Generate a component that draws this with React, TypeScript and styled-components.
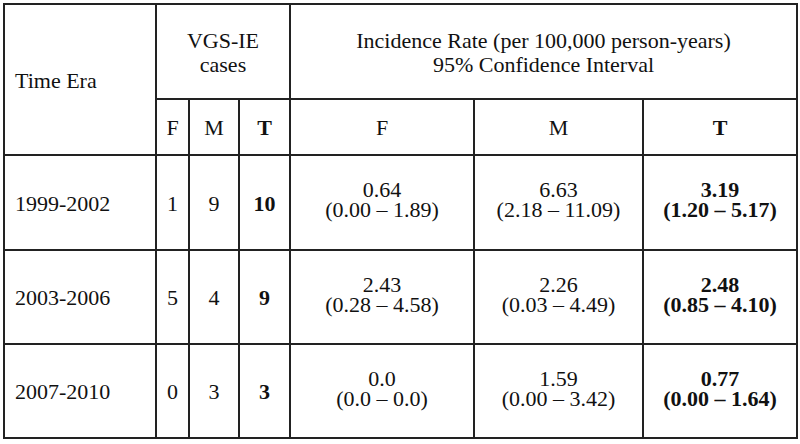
import React from 'react'
import styled, { createGlobalStyle } from 'styled-components'

const GlobalStyle = createGlobalStyle`
  html, body {
    margin: 0;
    padding: 0;
    background: #ffffff;
  }
  body {
    font-family: 'Liberation Serif', 'Times New Roman', serif;
    color: #111111;
  }
`

const StyledPage = styled.div`
  width: 800px;
  height: 444px;
  padding: 3px 0 0 3px;
  box-sizing: border-box;
  background: #ffffff;
`

const StyledTable = styled.table`
  border-collapse: collapse;
  table-layout: fixed;
  width: 793px;
  font-size: 22px;
  font-family: 'Liberation Serif', 'Times New Roman', serif;
`

const StyledRow = styled.tr<{ $height: number }>`
  height: ${props => props.$height}px;
`

const StyledCell = styled.td<{ $align?: 'left' | 'center'; $bold?: boolean; $tight?: boolean }>`
  border: 2px solid #222222;
  padding: ${props => (props.$align === 'left' ? '2px 0 0 10px' : props.$tight ? '0 0 5px 0' : '2px 0 0 0')};
  text-align: ${props => props.$align || 'center'};
  vertical-align: middle;
  font-weight: ${props => (props.$bold ? 'bold' : 'normal')};
  line-height: ${props => (props.$tight ? '20px' : '24px')};
  white-space: nowrap;
`

const StyledLine = styled.div`
  display: block;
`

type Interval = { rate: string; range: string }

const rows: {
  era: string
  f: string
  m: string
  t: string
  rates: [Interval, Interval, Interval]
}[] = [
  {
    era: '1999-2002',
    f: '1',
    m: '9',
    t: '10',
    rates: [
      { rate: '0.64', range: '(0.00 – 1.89)' },
      { rate: '6.63', range: '(2.18 – 11.09)' },
      { rate: '3.19', range: '(1.20 – 5.17)' },
    ],
  },
  {
    era: '2003-2006',
    f: '5',
    m: '4',
    t: '9',
    rates: [
      { rate: '2.43', range: '(0.28 – 4.58)' },
      { rate: '2.26', range: '(0.03 – 4.49)' },
      { rate: '2.48', range: '(0.85 – 4.10)' },
    ],
  },
  {
    era: '2007-2010',
    f: '0',
    m: '3',
    t: '3',
    rates: [
      { rate: '0.0', range: '(0.0 – 0.0)' },
      { rate: '1.59', range: '(0.00 – 3.42)' },
      { rate: '0.77', range: '(0.00 – 1.64)' },
    ],
  },
]

const rowHeights = [95, 94, 94]

const App: React.FC = () => {
  return (
    <StyledPage>
      <GlobalStyle />
      <StyledTable>
        <colgroup>
          <col style={{ width: 152 }} />
          <col style={{ width: 33 }} />
          <col style={{ width: 50 }} />
          <col style={{ width: 51 }} />
          <col style={{ width: 184 }} />
          <col style={{ width: 169 }} />
          <col style={{ width: 154 }} />
        </colgroup>
        <tbody>
          <StyledRow $height={95}>
            <StyledCell rowSpan={2} $align="left">
              Time Era
            </StyledCell>
            <StyledCell colSpan={3}>
              <StyledLine>VGS-IE</StyledLine>
              <StyledLine>cases</StyledLine>
            </StyledCell>
            <StyledCell colSpan={3}>
              <StyledLine>Incidence Rate (per 100,000 person-years)</StyledLine>
              <StyledLine>95% Confidence Interval</StyledLine>
            </StyledCell>
          </StyledRow>
          <StyledRow $height={56}>
            <StyledCell>F</StyledCell>
            <StyledCell>M</StyledCell>
            <StyledCell $bold>T</StyledCell>
            <StyledCell>F</StyledCell>
            <StyledCell>M</StyledCell>
            <StyledCell $bold>T</StyledCell>
          </StyledRow>
          {rows.map((row, i) => (
            <StyledRow key={row.era} $height={rowHeights[i]}>
              <StyledCell $align="left">{row.era}</StyledCell>
              <StyledCell>{row.f}</StyledCell>
              <StyledCell>{row.m}</StyledCell>
              <StyledCell $bold>{row.t}</StyledCell>
              {row.rates.map((r, j) => (
                <StyledCell key={j} $tight $bold={j === 2}>
                  <StyledLine>{r.rate}</StyledLine>
                  <StyledLine>{r.range}</StyledLine>
                </StyledCell>
              ))}
            </StyledRow>
          ))}
        </tbody>
      </StyledTable>
    </StyledPage>
  )
}

export default App
